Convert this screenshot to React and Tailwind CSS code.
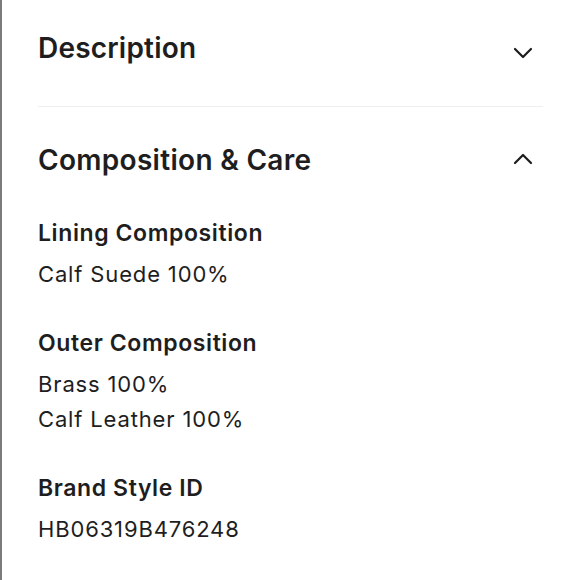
import React, { useState } from "react";

const font = { fontFamily: "Inter, 'Liberation Sans', sans-serif" };

const Chevron = ({ up }) => (
  <svg
    width="20"
    height="12"
    viewBox="0 0 20 12"
    fill="none"
    className={`mr-[10px] ${up ? "mt-[10px]" : "mt-[16px]"}`}
  >
    <polyline
      points={up ? "2,10 10,2 18,10" : "2,2 10,10 18,2"}
      stroke="#1c1c1c"
      strokeWidth="2.2"
      strokeLinecap="round"
      strokeLinejoin="round"
    />
  </svg>
);

const details = [
  { label: "Lining Composition", values: ["Calf Suede 100%"] },
  { label: "Outer Composition", values: ["Brass 100%", "Calf Leather 100%"] },
  { label: "Brand Style ID", values: ["HB06319B476248"] },
];

export default function App() {
  const [open, setOpen] = useState("care");

  return (
    <div className="w-[580px] h-[580px] bg-white overflow-hidden border-l-2 border-[#7b7b7b] text-[#1e1e1e]" style={font}>
      <div className="pl-[36px] pr-[37px]">
        {/* Description */}
        <button
          className="w-full flex items-start justify-between pt-[31px] pb-[41px] border-b border-[#efefef]"
          onClick={() => setOpen(open === "desc" ? "" : "desc")}
        >
          <h2 className="text-[28px] leading-[34px] font-semibold tracking-[0.2px]">Description</h2>
          <Chevron up={open === "desc"} />
        </button>

        {/* Composition & Care */}
        <button
          className="w-full flex items-start justify-between pt-[36px]"
          onClick={() => setOpen(open === "care" ? "" : "care")}
        >
          <h2 className="text-[28px] leading-[34px] font-semibold tracking-[0.3px]">Composition &amp; Care</h2>
          <Chevron up={open === "care"} />
        </button>

        {open === "care" && (
          <div className="pt-[41px] flex flex-col gap-[36px]">
            {details.map((d) => (
              <div key={d.label}>
                <h3 className="text-[23px] leading-[30px] font-semibold tracking-[0.6px]">{d.label}</h3>
                <div className="mt-[9px]">
                  {d.values.map((v) => (
                    <p key={v} className="text-[22px] leading-[35px] tracking-[0.85px]">{v}</p>
                  ))}
                </div>
              </div>
            ))}
          </div>
        )}
      </div>
    </div>
  );
}
